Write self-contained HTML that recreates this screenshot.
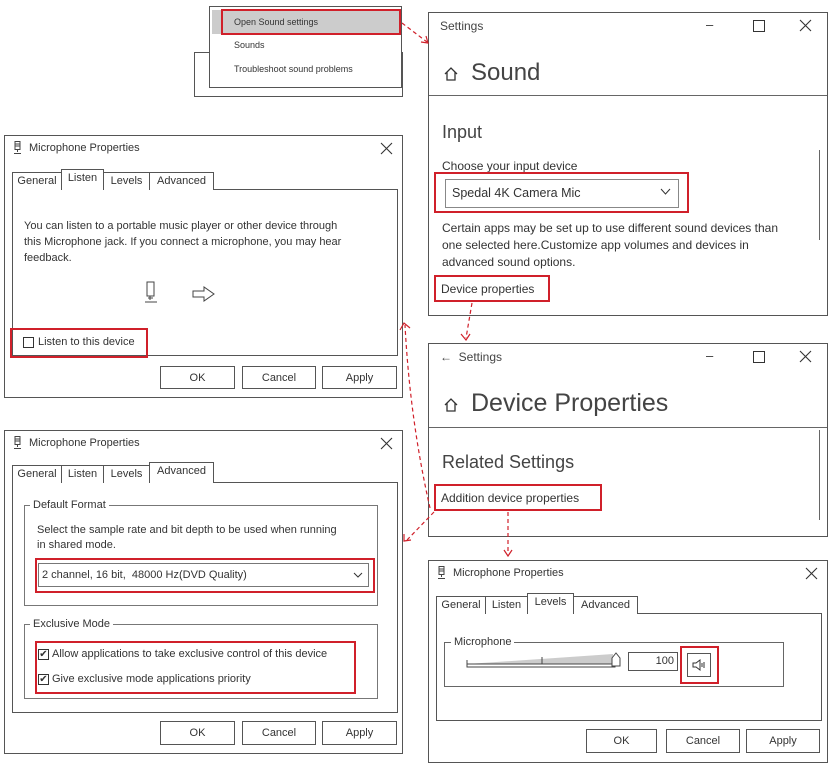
<!DOCTYPE html><html><head><style>
body{margin:0;width:834px;height:768px;background:#fff;position:relative;overflow:hidden;font-family:"Liberation Sans",sans-serif;color:#333}
.a{position:absolute}
.b{position:absolute;border:1px solid #555;box-sizing:border-box;background:#fff}
.t{position:absolute;white-space:nowrap}
.r{position:absolute;border:2px solid #d0202a;box-sizing:border-box}
.btn{position:absolute;border:1px solid #555;box-sizing:border-box;background:#fff;font-size:11px;text-align:center;line-height:22px}
.tab{position:absolute;border:1px solid #555;border-bottom:none;box-sizing:border-box;font-size:11px;text-align:center;line-height:17px;background:#fff}
.cb{position:absolute;width:11px;height:11px;border:1px solid #333;box-sizing:border-box;font-size:10px;line-height:9px;text-align:center}
</style></head><body>
<svg width="0" height="0" style="position:absolute"><defs>
<g id="mic"><rect x="3" y="0.5" width="5" height="8" fill="none" stroke="#444"/><path d="M5.5 8.5 V11 M2 12.5 H9" stroke="#444" fill="none"/><path d="M3 3 H8 M3 5 H8" stroke="#444"/></g>
<g id="x"><path d="M1 1 L12 12 M12 1 L1 12" stroke="#333" stroke-width="1.1"/></g>
</defs></svg>
<!-- context menu -->
<div class="b" style="left:194px;top:52px;width:209px;height:45px"></div>
<div class="b" style="left:209px;top:6px;width:193px;height:82px"></div>
<div class="a" style="left:212px;top:10px;width:188px;height:24px;background:#ccc"></div>
<div class="r" style="left:221px;top:9px;width:180px;height:26px"></div>
<div class="t" style="left:234px;top:17px;font-size:9px">Open Sound settings</div>
<div class="t" style="left:234px;top:40px;font-size:9px">Sounds</div>
<div class="t" style="left:234px;top:64px;font-size:9px">Troubleshoot sound problems</div>

<!-- settings 1 -->
<div class="b" style="left:428px;top:12px;width:400px;height:304px"></div>
<div class="t" style="left:440px;top:19px;font-size:12px;color:#444">Settings</div>
<div class="t" style="left:706px;top:17px;font-size:13px">&#8211;</div>
<div class="a" style="left:753px;top:20px;width:10px;height:10px;border:1px solid #333"></div>
<svg class="a" style="left:799px;top:19px" width="13" height="13"><use href="#x"/></svg>
<svg class="a" style="left:443px;top:66px" width="16" height="16"><path d="M2 8 L8 2 L14 8 M4 6 V14 H12 V6" fill="none" stroke="#333" stroke-width="1.3"/></svg>
<div class="t" style="left:471px;top:59px;font-size:24px;color:#444">Sound</div>
<div class="a" style="left:429px;top:95px;width:398px;height:1px;background:#666"></div>
<div class="t" style="left:442px;top:122px;font-size:18px;color:#444">Input</div>
<div class="t" style="left:442px;top:159px;font-size:12px">Choose your input device</div>
<div class="r" style="left:434px;top:172px;width:255px;height:41px"></div>
<div class="b" style="left:445px;top:179px;width:234px;height:29px;border-color:#888"></div>
<div class="t" style="left:452px;top:186px;font-size:12.5px">Spedal 4K Camera Mic</div>
<svg class="a" style="left:660px;top:188px" width="11" height="8"><path d="M1 1 L5.5 6 L10 1" fill="none" stroke="#333"/></svg>
<div class="t" style="left:442px;top:220px;font-size:12px;line-height:17px">Certain apps may be set up to use different sound devices than<br>one selected here.Customize app volumes and devices in<br>advanced sound options.</div>
<div class="r" style="left:434px;top:275px;width:116px;height:27px"></div>
<div class="t" style="left:441px;top:282px;font-size:12px">Device properties</div>
<div class="a" style="left:819px;top:150px;width:1px;height:90px;background:#666"></div>

<!-- settings 2 -->
<div class="b" style="left:428px;top:343px;width:400px;height:194px"></div>
<div class="t" style="left:440px;top:350px;font-size:12px;color:#444">&#8592;&nbsp; Settings</div>
<div class="t" style="left:706px;top:348px;font-size:13px">&#8211;</div>
<div class="a" style="left:753px;top:351px;width:10px;height:10px;border:1px solid #333"></div>
<svg class="a" style="left:799px;top:350px" width="13" height="13"><use href="#x"/></svg>
<svg class="a" style="left:443px;top:397px" width="16" height="16"><path d="M2 8 L8 2 L14 8 M4 6 V14 H12 V6" fill="none" stroke="#333" stroke-width="1.3"/></svg>
<div class="t" style="left:471px;top:389px;font-size:25px;color:#444">Device Properties</div>
<div class="a" style="left:429px;top:427px;width:398px;height:1px;background:#666"></div>
<div class="t" style="left:442px;top:452px;font-size:18px;color:#444">Related Settings</div>
<div class="r" style="left:434px;top:484px;width:168px;height:27px"></div>
<div class="t" style="left:441px;top:491px;font-size:12px">Addition device properties</div>
<div class="a" style="left:819px;top:430px;width:1px;height:90px;background:#666"></div>

<!-- dialog 1 listen -->
<div class="b" style="left:4px;top:135px;width:399px;height:263px"></div>
<svg class="a" style="left:12px;top:141px" width="12" height="14"><use href="#mic"/></svg>
<div class="t" style="left:29px;top:142px;font-size:11px">Microphone Properties</div>
<svg class="a" style="left:380px;top:142px" width="13" height="13"><use href="#x"/></svg>
<div class="b" style="left:12px;top:189px;width:386px;height:167px"></div>
<div class="tab" style="left:12px;top:172px;width:50px;height:18px">General</div>
<div class="tab" style="left:61px;top:169px;width:43px;height:21px;line-height:17px">Listen</div>
<div class="tab" style="left:103px;top:172px;width:47px;height:18px">Levels</div>
<div class="tab" style="left:149px;top:172px;width:65px;height:18px">Advanced</div>
<div class="a" style="left:62px;top:189px;width:41px;height:2px;background:#fff"></div>
<div class="t" style="left:24px;top:218px;font-size:11px;line-height:16px">You can listen to a portable music player or other device through<br>this Microphone jack. If you connect a microphone, you may hear<br>feedback.</div>
<svg class="a" style="left:143px;top:281px" width="16" height="24"><rect x="4" y="1" width="7" height="14" fill="none" stroke="#444"/><path d="M7 15 V19 M2 21 H14 M5 17 L10 17" stroke="#444" fill="none"/></svg>
<svg class="a" style="left:192px;top:286px" width="24" height="16"><path d="M1 5 H12 V1 L22 8 L12 15 V11 H1 Z" fill="none" stroke="#444"/></svg>
<div class="r" style="left:10px;top:328px;width:138px;height:30px"></div>
<div class="cb" style="left:23px;top:337px"></div>
<div class="t" style="left:38px;top:336px;font-size:11px">Listen to this device</div>
<div class="btn" style="left:160px;top:366px;width:75px;height:23px">OK</div>
<div class="btn" style="left:242px;top:366px;width:74px;height:23px">Cancel</div>
<div class="btn" style="left:322px;top:366px;width:75px;height:23px">Apply</div>

<!-- dialog 2 advanced -->
<div class="b" style="left:4px;top:430px;width:399px;height:324px"></div>
<svg class="a" style="left:12px;top:436px" width="12" height="14"><use href="#mic"/></svg>
<div class="t" style="left:29px;top:437px;font-size:11px">Microphone Properties</div>
<svg class="a" style="left:380px;top:437px" width="13" height="13"><use href="#x"/></svg>
<div class="b" style="left:12px;top:482px;width:386px;height:231px"></div>
<div class="tab" style="left:12px;top:465px;width:50px;height:18px">General</div>
<div class="tab" style="left:61px;top:465px;width:43px;height:18px">Listen</div>
<div class="tab" style="left:103px;top:465px;width:47px;height:18px">Levels</div>
<div class="tab" style="left:149px;top:462px;width:65px;height:21px;line-height:17px">Advanced</div>
<div class="a" style="left:150px;top:482px;width:63px;height:2px;background:#fff"></div>
<div class="b" style="left:24px;top:505px;width:354px;height:101px;border-color:#777"></div>
<div class="t" style="left:30px;top:499px;font-size:11px;background:#fff;padding:0 3px">Default Format</div>
<div class="t" style="left:37px;top:523px;font-size:11px;line-height:15px">Select the sample rate and bit depth to be used when running<br>in shared mode.</div>
<div class="r" style="left:35px;top:558px;width:340px;height:35px"></div>
<div class="b" style="left:38px;top:563px;width:331px;height:24px;border-color:#777"></div>
<div class="t" style="left:42px;top:569px;font-size:11px">2 channel, 16 bit,&nbsp; 48000 Hz(DVD Quality)</div>
<svg class="a" style="left:353px;top:572px" width="10" height="7"><path d="M1 1 L5 5 L9 1" fill="none" stroke="#333"/></svg>
<div class="b" style="left:24px;top:624px;width:354px;height:75px;border-color:#777"></div>
<div class="t" style="left:30px;top:618px;font-size:11px;background:#fff;padding:0 3px">Exclusive Mode</div>
<div class="r" style="left:35px;top:641px;width:321px;height:53px"></div>
<div class="cb" style="left:38px;top:649px">&#10004;</div>
<div class="t" style="left:52px;top:648px;font-size:11px">Allow applications to take exclusive control of this device</div>
<div class="cb" style="left:38px;top:674px">&#10004;</div>
<div class="t" style="left:52px;top:673px;font-size:11px">Give exclusive mode applications priority</div>
<div class="btn" style="left:160px;top:721px;width:75px;height:24px">OK</div>
<div class="btn" style="left:242px;top:721px;width:74px;height:24px">Cancel</div>
<div class="btn" style="left:322px;top:721px;width:75px;height:24px">Apply</div>

<!-- dialog 3 levels -->
<div class="b" style="left:428px;top:560px;width:400px;height:203px"></div>
<svg class="a" style="left:436px;top:566px" width="12" height="14"><use href="#mic"/></svg>
<div class="t" style="left:453px;top:567px;font-size:11px">Microphone Properties</div>
<svg class="a" style="left:805px;top:567px" width="13" height="13"><use href="#x"/></svg>
<div class="b" style="left:436px;top:613px;width:386px;height:108px"></div>
<div class="tab" style="left:436px;top:596px;width:50px;height:18px">General</div>
<div class="tab" style="left:485px;top:596px;width:43px;height:18px">Listen</div>
<div class="tab" style="left:527px;top:593px;width:47px;height:21px;line-height:17px">Levels</div>
<div class="tab" style="left:573px;top:596px;width:65px;height:18px">Advanced</div>
<div class="a" style="left:528px;top:613px;width:45px;height:2px;background:#fff"></div>
<div class="b" style="left:444px;top:642px;width:340px;height:45px;border-color:#666"></div>
<div class="t" style="left:451px;top:636px;font-size:11px;background:#fff;padding:0 3px">Microphone</div>
<svg class="a" style="left:465px;top:650px" width="160" height="20"><path d="M2 14 L148 4 V14 Z" fill="#ccc"/><rect x="2" y="14" width="148" height="3" fill="none" stroke="#444"/><path d="M2 10 V14 M77 7 V14" stroke="#444"/><path d="M147 16 V8 L151 3 L155 8 V16 Z" fill="#fff" stroke="#444"/></svg>
<div class="b" style="left:628px;top:652px;width:50px;height:19px;font-size:11px;text-align:right;padding-right:3px;line-height:17px">100</div>
<div class="r" style="left:680px;top:646px;width:39px;height:38px"></div>
<div class="b" style="left:687px;top:653px;width:24px;height:24px"></div>
<svg class="a" style="left:692px;top:658px" width="14" height="14"><path d="M1 5 H4 L8 2 V12 L4 9 H1 Z" fill="none" stroke="#333"/><path d="M10 5 V9 M12 4 V10" stroke="#333"/></svg>
<div class="btn" style="left:586px;top:729px;width:71px;height:24px">OK</div>
<div class="btn" style="left:666px;top:729px;width:74px;height:24px">Cancel</div>
<div class="btn" style="left:746px;top:729px;width:74px;height:24px">Apply</div>

<!-- arrows -->
<svg class="a" style="left:0;top:0" width="834" height="768">
<g stroke="#d0202a" stroke-width="1.2" fill="none" stroke-dasharray="4 3">
<path d="M402 23 L427 42"/>
<path d="M472 303 L466 338"/>
<path d="M434 512 L407 540"/>
<path d="M508 512 L508 553"/>
<path d="M430 508 Q410 420 405 325"/>
</g>
<g stroke="#d0202a" stroke-width="1.2" fill="none">
<path d="M421 42 L428 43 L426 36"/>
<path d="M461 334 L466 340 L470 334"/>
<path d="M404 534 L404 541 L411 540"/>
<path d="M504 550 L508 556 L512 550"/>
<path d="M400 330 L404 323 L410 328"/>
</g>
</svg>
</body></html>
